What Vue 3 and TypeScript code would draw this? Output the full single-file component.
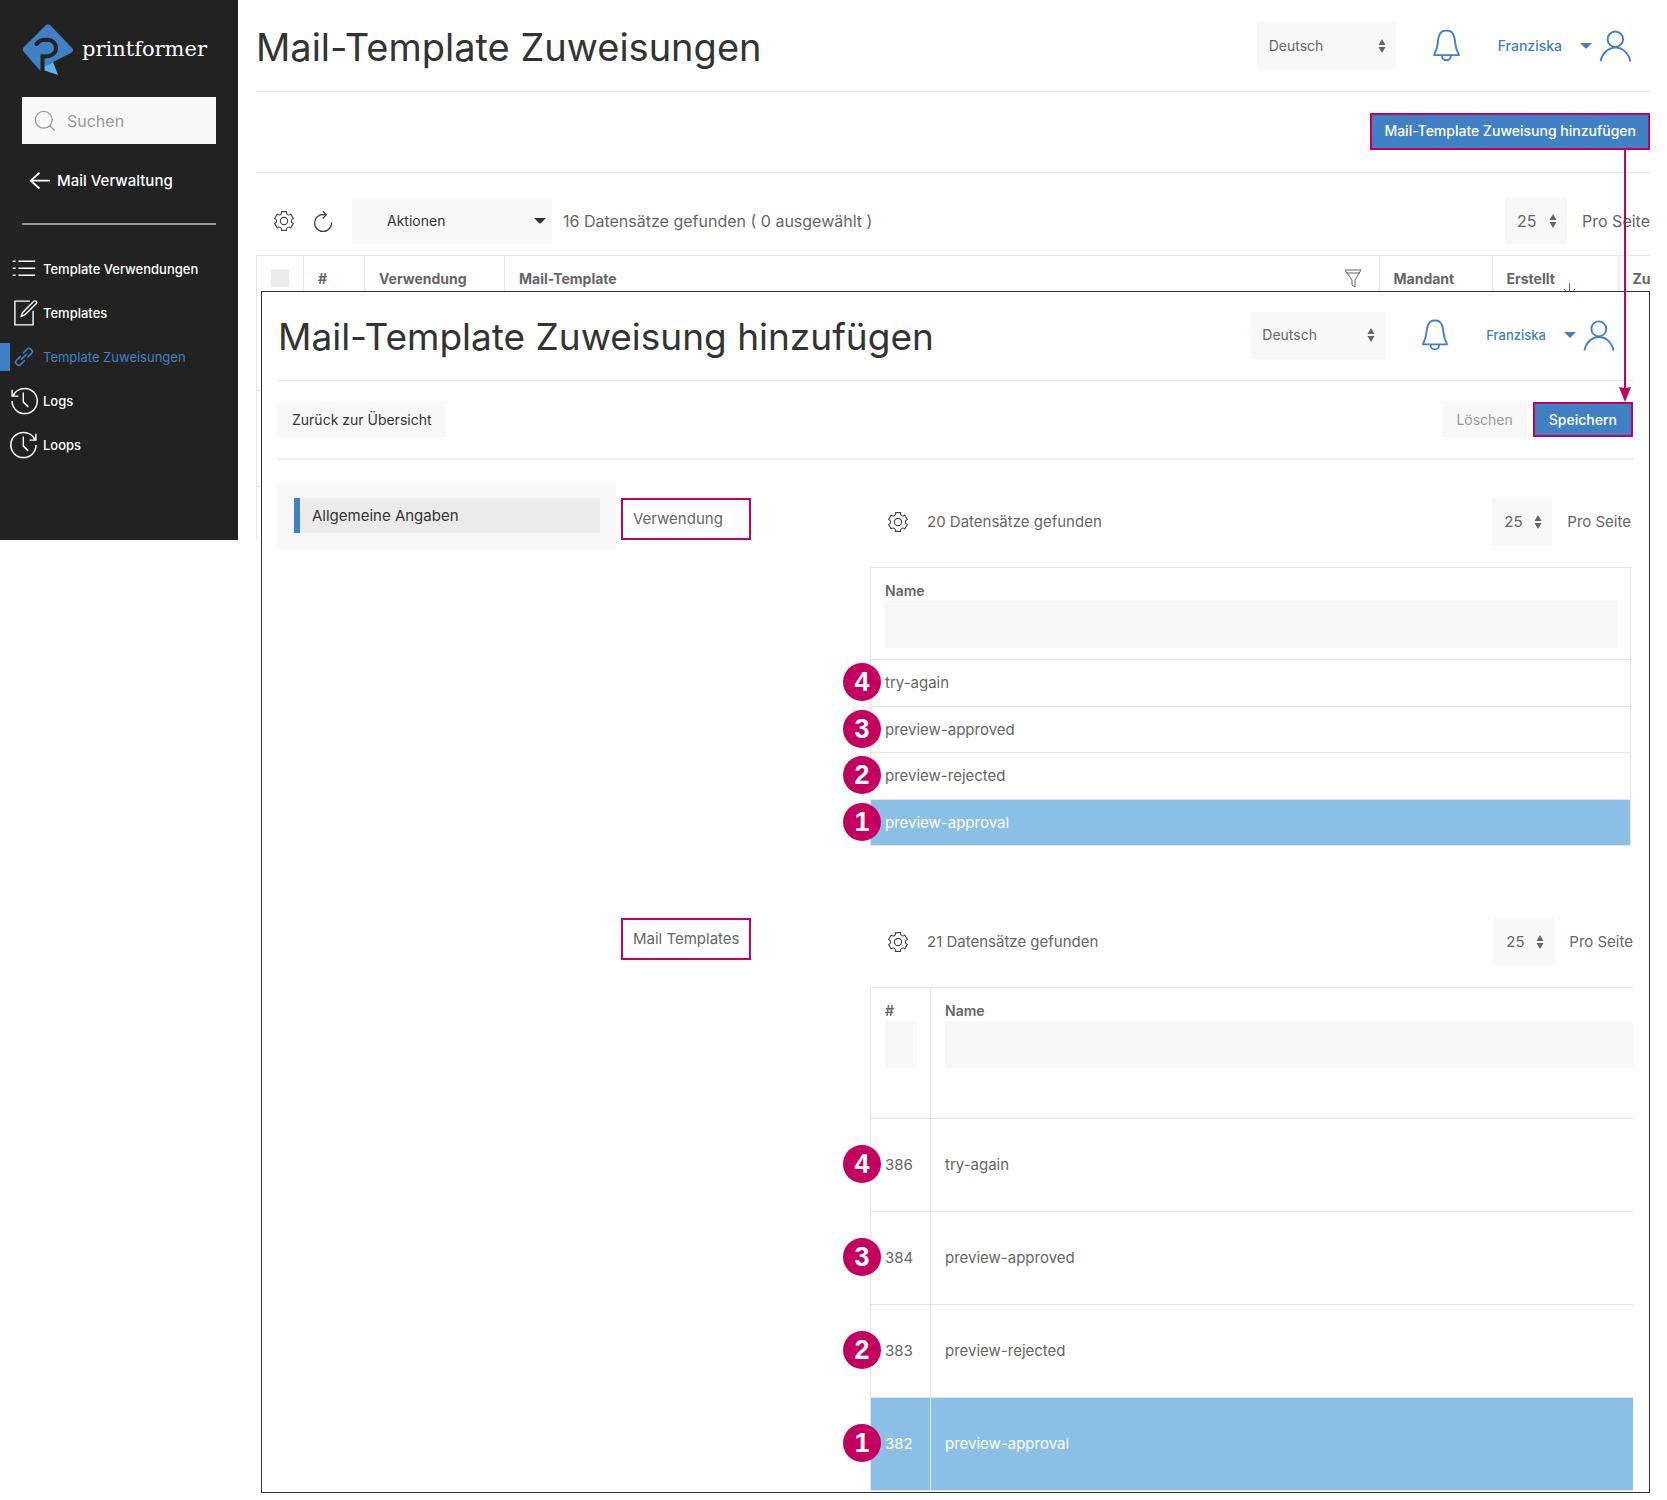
<script setup lang="ts">
import { ref } from 'vue'

interface NavItem {
  label: string
  icon: string
  active?: boolean
}

interface Row {
  id: number
  name: string
  step: number
  selected?: boolean
}

const nav: NavItem[] = [
  { label: 'Template Verwendungen', icon: 'list' },
  { label: 'Templates', icon: 'edit' },
  { label: 'Template Zuweisungen', icon: 'link', active: true },
  { label: 'Logs', icon: 'history' },
  { label: 'Loops', icon: 'future' },
]

const rows: Row[] = [
  { id: 386, name: 'try-again', step: 4 },
  { id: 384, name: 'preview-approved', step: 3 },
  { id: 383, name: 'preview-rejected', step: 2 },
  { id: 382, name: 'preview-approval', step: 1, selected: true },
]

const search = ref('')
</script>

<template>
  <svg class="sprite" aria-hidden="true">
    <symbol id="list" viewBox="0 0 20 20">
      <path fill="currentColor" d="M6 4h12v1H6zM6 9h12v1H6zM6 14h12v1H6zM2 4h2v1H2zM2 9h2v1H2zM2 14h2v1H2z" />
    </symbol>
    <symbol id="edit" viewBox="0 0 20 20">
      <path fill="none" stroke="currentColor" d="M18.65,1.68 C18.41,1.45 18.109,1.33 17.81,1.33 C17.499,1.33 17.209,1.45 16.98,1.68 L8.92,9.76 L8,12.33 L10.55,11.41 L18.651,3.34 C19.12,2.87 19.12,2.15 18.65,1.68 Z M16.5,8.482 L16.5,18.5 L3.5,18.5 L3.5,1.5 L14.211,1.5" />
    </symbol>
    <symbol id="link" viewBox="0 0 20 20">
      <path fill="none" stroke="currentColor" stroke-width="1.1" d="M10.625,12.375 L7.525,15.475 C6.825,16.175 5.925,16.175 5.225,15.475 L4.525,14.775 C3.825,14.074 3.825,13.175 4.525,12.475 L7.625,9.375 M9.325,7.375 L12.425,4.275 C13.125,3.575 14.025,3.575 14.724,4.275 L15.425,4.975 C16.125,5.675 16.125,6.575 15.425,7.275 L12.325,10.375 M7.925,11.875 L11.925,7.975" />
    </symbol>
    <symbol id="history" viewBox="0 0 20 20">
      <path fill="currentColor" d="M1 2h1v4h4v1H1zM9 4h1v7H9z" />
      <path fill="none" stroke="currentColor" stroke-width="1.1" d="M2.1,6.548 C3.391,3.29 6.746,1 10.5,1 C15.5,1 19.5,5 19.5,10 C19.5,15 15.5,19 10.5,19 C5.5,19 1.5,15 1.5,10 M13.018,14.197 L9.445,10.625" />
    </symbol>
    <symbol id="future" viewBox="0 0 20 20">
      <path fill="currentColor" d="M19 2h-1v4h-4v1h5zM9 4h1v7H9z" />
      <path fill="none" stroke="currentColor" stroke-width="1.1" d="M18,6.548 C16.709,3.29 13.354,1 9.6,1 C4.6,1 .6,5 .6,10 C.6,15 4.6,19 9.6,19 C14.6,19 18.6,15 18.6,10 M13.018,14.197 L9.445,10.625" />
    </symbol>
    <symbol id="search" viewBox="0 0 20 20">
      <path fill="none" stroke="currentColor" stroke-width="1.1" d="M16,9 A7,7 0 1 1 2,9 A7,7 0 1 1 16,9 M14,14 L18,18" />
    </symbol>
    <symbol id="back" viewBox="0 0 20 20">
      <path fill="none" stroke="currentColor" d="M10,14 L5,9.5 L10,5 M16,9.5 L5,9.5" />
    </symbol>
    <symbol id="cog" viewBox="0 0 20 20">
      <circle fill="none" stroke="currentColor" cx="9.997" cy="10" r="3.31" />
      <path fill="none" stroke="currentColor" d="M18.488,12.285 L16.205,16.237 C15.322,15.496 14.185,15.281 13.303,15.791 C12.428,16.289 12.047,17.373 12.246,18.5 L7.735,18.5 C7.938,17.374 7.553,16.299 6.684,15.791 C5.801,15.27 4.655,15.492 3.773,16.237 L1.5,12.285 C2.573,11.871 3.317,10.999 3.317,9.991 C3.305,8.98 2.573,8.121 1.5,7.716 L3.765,3.784 C4.645,4.516 5.794,4.738 6.687,4.232 C7.555,3.722 7.939,2.637 7.735,1.5 L12.263,1.5 C12.072,2.637 12.441,3.71 13.314,4.22 C14.206,4.73 15.343,4.516 16.225,3.794 L18.487,7.714 C17.404,8.117 16.661,8.988 16.67,10.009 C16.672,11.018 17.415,11.88 18.488,12.285 Z" />
    </symbol>
    <symbol id="refresh" viewBox="0 0 20 20">
      <path fill="none" stroke="currentColor" stroke-width="1.1" d="M17.08,11.15 C17.09,11.31 17.1,11.47 17.1,11.64 C17.1,15.53 13.94,18.69 10.05,18.69 C6.16,18.68 3,15.53 3,11.63 C3,7.74 6.16,4.58 10.05,4.58 C10.9,4.58 11.71,4.73 12.46,5 M9.9,2 L12.79,4.89 L9.79,7.9" />
    </symbol>
    <symbol id="bell" viewBox="0 0 20 20">
      <path fill="none" stroke="currentColor" stroke-width="1.1" d="M17,15.5 L3,15.5 C2.99,14.61 3.79,13.34 4.1,12.51 C4.58,11.3 4.72,10.35 5.19,7.01 C5.54,4.53 5.89,3.2 7.28,2.16 C8.13,1.56 9.37,1.5 9.81,1.5 L9.96,1.5 C9.96,1.5 11.62,1.41 12.67,2.17 C14.08,3.2 14.42,4.54 14.77,7.02 C15.26,10.35 15.4,11.31 15.87,12.52 C16.2,13.34 17.01,14.61 17,15.5 Z M12.39,16 C12.39,17.37 11.35,18.43 9.91,18.43 C8.48,18.43 7.42,17.37 7.42,16" />
    </symbol>
    <symbol id="user" viewBox="0 0 20 20">
      <circle fill="none" stroke="currentColor" stroke-width="1.1" cx="9.9" cy="6.4" r="4.4" />
      <path fill="none" stroke="currentColor" stroke-width="1.1" d="M1.5,19 C2.3,14.5 5.8,11.2 10,11.2 C14.2,11.2 17.7,14.6 18.5,19.2" />
    </symbol>
    <symbol id="caret" viewBox="0 0 12 6">
      <path fill="currentColor" d="M0,0 H12 L7,5 Q6,6 5,5 Z" />
    </symbol>
    <symbol id="updown" viewBox="0 0 8 14">
      <path fill="currentColor" d="M4,0 L7.5,6 H.5 Z M.5,8 H7.5 L4,14 Z" />
    </symbol>
    <symbol id="filter" viewBox="0 0 18 20">
      <path fill="none" stroke="currentColor" d="M1,1 H17 L11,11 V18 L8,16 V11 Z M2,4 H16" />
    </symbol>
  </svg>

  <div class="page">
    <aside class="sidebar">
      <a class="brand" href="#">
        <svg class="logo" viewBox="0 0 52 52" aria-hidden="true">
          <path fill="#4080c4" d="M23.500 2.500 Q26 0 28.500 2.500 L50 25 Q52.500 28 49 30 L27 41 L21 48 Q19 49 17.500 47 L1.500 28.500 Q0 26.500 1.500 24.500 Z" />
          <path fill="#62b0e6" d="M22 44 L31 39 L36 52 L21 47 Z" />
          <path fill="none" stroke="#222" stroke-width="4" stroke-linecap="round" d="M14.500 21 C19 14.500 34 15 34 25 C34 32 27 34 20.500 33.500 L20.500 48" />
        </svg>
        <span>printformer</span>
      </a>
      <label class="search">
        <svg width="24" height="24" aria-hidden="true"><use href="#search" /></svg>
        <input v-model="search" type="search" placeholder="Suchen" aria-label="Suchen" />
      </label>
      <a class="back" href="#">
        <svg width="35" height="35" aria-hidden="true"><use href="#back" /></svg>
        <span>Mail Verwaltung</span>
      </a>
      <nav>
        <a v-for="item in nav" :key="item.label" href="#" :class="{ active: item.active }">
          <svg width="28" height="28" aria-hidden="true"><use :href="'#' + item.icon" /></svg>
          <span>{{ item.label }}</span>
        </a>
      </nav>
    </aside>

    <main class="main">
      <header class="header">
        <h1>Mail-Template Zuweisungen</h1>
        <label class="select language">
          <select aria-label="Sprache"><option>Deutsch</option></select>
          <svg width="8" height="14" aria-hidden="true"><use href="#updown" /></svg>
        </label>
        <button class="icon" aria-label="Benachrichtigungen"><svg width="35" height="35"><use href="#bell" /></svg></button>
        <button class="user">
          <span>Franziska</span>
          <svg class="caret" width="12" height="6"><use href="#caret" /></svg>
          <svg width="35" height="35"><use href="#user" /></svg>
        </button>
      </header>
      <div class="actions">
        <button class="primary wide">Mail-Template Zuweisung hinzufügen</button>
      </div>
      <div class="toolbar">
        <button class="icon" aria-label="Einstellungen"><svg width="22" height="22"><use href="#cog" /></svg></button>
        <button class="icon" aria-label="Aktualisieren"><svg width="24" height="24"><use href="#refresh" /></svg></button>
        <button class="dropdown">
          <span>Aktionen</span>
          <svg width="12" height="6"><use href="#caret" /></svg>
        </button>
        <span class="count">16 Datensätze gefunden ( 0 ausgewählt )</span>
        <label class="perpage">
          <span class="select">
            <select><option>25</option></select>
            <svg width="8" height="14" aria-hidden="true"><use href="#updown" /></svg>
          </span>
          <span>Pro Seite</span>
        </label>
      </div>
      <div class="listing">
        <table>
          <colgroup>
            <col class="c-check" /><col class="c-id" /><col class="c-use" /><col />
            <col class="c-client" /><col class="c-date" /><col class="c-last" />
          </colgroup>
          <thead>
            <tr>
              <th><input type="checkbox" aria-label="Alle auswählen" /></th>
              <th>#</th>
              <th>Verwendung</th>
              <th>
                <span class="th-line">Mail-Template<svg class="filter" width="18" height="20"><use href="#filter" /></svg></span>
              </th>
              <th>Mandant</th>
              <th>
                <span class="th-line">Erstellt<svg class="sort" width="12" height="20" viewBox="0 0 12 20"><path fill="none" stroke="currentColor" d="M6.500 4 V17 M1 10 L6.500 16 L12 10" /></svg></span>
              </th>
              <th>Zu</th>
            </tr>
          </thead>
          <tbody>
            <tr v-for="n in 2" :key="n"><td v-for="c in 7" :key="c"></td></tr>
          </tbody>
        </table>
      </div>
    </main>

    <section class="panel">
      <header class="header">
        <h2>Mail-Template Zuweisung hinzufügen</h2>
        <label class="select language">
          <select aria-label="Sprache"><option>Deutsch</option></select>
          <svg width="8" height="14" aria-hidden="true"><use href="#updown" /></svg>
        </label>
        <button class="icon" aria-label="Benachrichtigungen"><svg width="34" height="34"><use href="#bell" /></svg></button>
        <button class="user">
          <span>Franziska</span>
          <svg class="caret" width="12" height="6"><use href="#caret" /></svg>
          <svg width="34" height="34"><use href="#user" /></svg>
        </button>
      </header>
      <div class="actions">
        <button class="plain">Zurück zur Übersicht</button>
        <button class="plain delete" disabled>Löschen</button>
        <button class="primary">Speichern</button>
      </div>
      <div class="body">
        <nav class="tabs"><a href="#">Allgemeine Angaben</a></nav>
        <div class="fields">
          <div class="field">
            <h3>Verwendung</h3>
            <div class="data">
              <div class="toolbar">
                <button class="icon" aria-label="Einstellungen"><svg width="22" height="22"><use href="#cog" /></svg></button>
                <span class="count">20 Datensätze gefunden</span>
                <label class="perpage">
                  <span class="select">
                    <select><option>25</option></select>
                    <svg width="8" height="14" aria-hidden="true"><use href="#updown" /></svg>
                  </span>
                  <span>Pro Seite</span>
                </label>
              </div>
              <table class="grid short">
                <thead>
                  <tr><th><label>Name<input type="text" /></label></th></tr>
                </thead>
                <tbody>
                  <tr v-for="row in rows" :key="row.id" :class="{ selected: row.selected }">
                    <td><span class="badge">{{ row.step }}</span>{{ row.name }}</td>
                  </tr>
                </tbody>
              </table>
            </div>
          </div>
          <div class="field">
            <h3>Mail Templates</h3>
            <div class="data">
              <div class="toolbar">
                <button class="icon" aria-label="Einstellungen"><svg width="22" height="22"><use href="#cog" /></svg></button>
                <span class="count">21 Datensätze gefunden</span>
                <label class="perpage">
                  <span class="select">
                    <select><option>25</option></select>
                    <svg width="8" height="14" aria-hidden="true"><use href="#updown" /></svg>
                  </span>
                  <span>Pro Seite</span>
                </label>
              </div>
              <table class="grid tall">
                <colgroup><col class="c-num" /><col /></colgroup>
                <thead>
                  <tr>
                    <th><label>#<input type="text" /></label></th>
                    <th><label>Name<input type="text" /></label></th>
                  </tr>
                </thead>
                <tbody>
                  <tr v-for="row in rows" :key="row.id" :class="{ selected: row.selected }">
                    <td><span class="badge">{{ row.step }}</span>{{ row.id }}</td>
                    <td>{{ row.name }}</td>
                  </tr>
                </tbody>
              </table>
            </div>
          </div>
        </div>
      </div>
    </section>

    <svg class="arrow" width="12" height="253" viewBox="0 0 12 253" aria-hidden="true">
      <path fill="#c3005f" d="M5 0 H7 V238 L12 237 L6 252 L0 237 L5 238 Z" />
    </svg>
  </div>
</template>

<style>
body {
  margin: 0;
  background: #fff;
}
</style>

<style scoped>
.sprite {
  position: absolute;
  width: 0;
  height: 0;
}
.page,
.page * {
  box-sizing: border-box;
}
.page {
  position: relative;
  display: grid;
  grid-template-columns: 238px minmax(0, 1fr);
  font-family: Inter, "Liberation Sans", sans-serif;
  font-size: 15px;
  line-height: 24px;
  color: #666;
}
svg {
  display: block;
  flex: none;
}
button,
input,
select {
  margin: 0;
  padding: 0;
  border: 0;
  border-radius: 0;
  font: inherit;
  color: inherit;
  background: none;
}
a {
  color: inherit;
  text-decoration: none;
}
h1,
h2,
h3 {
  margin: 0;
  font-weight: 400;
}

/* Sidebar */
.sidebar {
  grid-area: 1 / 1;
  align-self: start;
  min-height: 540px;
  background: #222;
  color: #fff;
}
.brand {
  display: flex;
  align-items: center;
  gap: 8px;
  height: 97px;
  padding-left: 22px;
  font-family: "DejaVu Serif", serif;
  font-size: 21px;
}
.logo {
  width: 52px;
  height: 52px;
}
.search {
  display: flex;
  align-items: center;
  gap: 10px;
  height: 47px;
  margin: 0 22px;
  padding-left: 11px;
  background: #f8f8f8;
  color: #999;
}
.search input {
  width: 100%;
  min-width: 0;
  font-size: 16px;
}
.search input::placeholder {
  color: #999;
  opacity: 1;
}
.back {
  display: flex;
  align-items: center;
  height: 81px;
  margin: 0 22px;
  padding-bottom: 5px;
  border-bottom: 2px solid #999;
  font-weight: 500;
}
.sidebar nav {
  padding-top: 30px;
}
.sidebar nav a {
  display: flex;
  align-items: center;
  gap: 5px;
  height: 28px;
  margin-bottom: 16px;
  padding-left: 10px;
  font-size: 13px;
  font-weight: 500;
}
.sidebar nav .active {
  padding-left: 0;
  border-left: 10px solid #4080c4;
  color: #4080c4;
  font-weight: 400;
}

/* Shared header and controls */
.header {
  display: flex;
  align-items: center;
  border-bottom: 1px solid #e5e5e5;
}
h1,
h2 {
  flex: 1;
  line-height: 48px;
  color: #333;
  white-space: nowrap;
}
h1 {
  padding-top: 2px;
  font-size: 38px;
}
h2 {
  padding-top: 4px;
  font-size: 37px;
}
.select {
  position: relative;
  display: flex;
  align-items: center;
  height: 47px;
  background: #f8f8f8;
}
.select select {
  width: 100%;
  height: 100%;
  padding-left: 12px;
  appearance: none;
}
.select svg {
  position: absolute;
  right: 10px;
  pointer-events: none;
}
.language {
  width: 139px;
  margin-right: 33px;
  font-size: 14px;
}
.header .icon {
  color: #4080c4;
}
.user {
  display: flex;
  align-items: center;
  margin: 0 17px 0 34px;
  color: #4080c4;
  font-size: 14px;
  font-weight: 500;
}
.user .caret {
  margin: 0 6px 0 18px;
}
.actions {
  display: flex;
  align-items: center;
  font-size: 14px;
}
.primary,
.plain {
  height: 35px;
  padding: 0 14px;
}
.primary {
  border: 2px solid #c3005f;
  background: #4080c4;
  color: #fff;
  font-weight: 500;
}
.plain {
  background: #f8f8f8;
  color: #333;
}
.delete {
  margin: 0 6px 0 auto;
  color: #999;
}
.toolbar {
  display: flex;
  align-items: center;
}
.toolbar .icon {
  color: #444;
}
.count {
  flex: 1;
}
.perpage {
  display: flex;
  align-items: center;
  gap: 15px;
}
.perpage .select {
  width: 60px;
}

/* Assignment overview */
.main {
  grid-area: 1 / 2;
  align-self: start;
  padding: 0 17px 0 18px;
}
.main .header {
  height: 92px;
}
.main .actions {
  justify-content: flex-end;
  height: 81px;
  padding-bottom: 2px;
  border-bottom: 1px solid #e5e5e5;
}
.actions .wide {
  height: 37px;
  padding: 0 12px;
}
.main .toolbar {
  gap: 16px;
  height: 82px;
  padding: 13px 0 0 17px;
  font-size: 16px;
}
.main .perpage .select {
  width: 62px;
}
.toolbar .dropdown {
  display: flex;
  align-items: center;
  justify-content: space-between;
  width: 200px;
  height: 46px;
  margin: 0 -5px 0 1px;
  padding: 0 6px 0 35px;
  background: #f8f8f8;
  color: #333;
  font-size: 14px;
}
.listing {
  height: 285px;
  overflow: hidden;
}
table {
  width: 100%;
  border-collapse: collapse;
  table-layout: fixed;
}
th,
td {
  border: 1px solid #e5e5e5;
  text-align: left;
}
th {
  font-size: 14px;
  line-height: 20px;
  font-weight: 600;
}
.listing th {
  height: 135px;
  padding: 13px 14px 0;
  font-weight: 700;
  vertical-align: top;
}
.listing td {
  height: 96px;
}
.listing th:last-child,
.listing td:last-child {
  border-right: 0;
}
.listing input {
  display: block;
  width: 18px;
  height: 18px;
  background: #ebebeb;
  appearance: none;
}
.th-line {
  display: flex;
  justify-content: space-between;
}
.filter {
  margin-right: 3px;
}
.sort {
  margin: 10px 29px 0 0;
  color: #4080c4;
}
.c-check { width: 47px; }
.c-id { width: 61px; }
.c-use { width: 140px; }
.c-client { width: 113px; }
.c-date { width: 126px; }
.c-last { width: 32px; }

/* Assignment form */
.panel {
  grid-area: 1 / 1 / 2 / 3;
  z-index: 1;
  margin: 291px 17px 0 261px;
  padding: 0 16px 1px;
  border: 1px solid #333;
  background: #fff;
}
.panel .header {
  height: 89px;
  padding-bottom: 2px;
}
.panel .language {
  width: 135px;
}
.panel .user {
  font-size: 13px;
}
.panel .actions {
  height: 79px;
  border-bottom: 2px solid #eee;
}
.body {
  display: flex;
  gap: 5px;
  padding-top: 22px;
}
.tabs {
  flex: none;
  align-self: flex-start;
  width: 338px;
  padding: 16px;
  background: #f8f8f8;
}
.tabs a {
  display: block;
  padding: 6px 12px 5px;
  border-left: 6px solid #4080c4;
  background: #ebebeb;
  color: #333;
}
.fields {
  flex: 1;
  padding-top: 16px;
}
.field {
  display: flex;
  align-items: flex-start;
}
.field:first-child {
  padding-right: 2px;
}
.field + .field {
  margin-top: 72px;
}
h3 {
  flex: none;
  width: 130px;
  margin-right: 119px;
  padding: 7px 10px;
  border: 2px solid #c3005f;
  font-size: 15px;
  line-height: 24px;
  white-space: nowrap;
}
.data {
  flex: 1;
}
.data .toolbar {
  gap: 18px;
  height: 47px;
  margin-bottom: 22px;
  padding-left: 17px;
}
.grid th {
  height: 92px;
  padding: 13px 13px 10px 14px;
  vertical-align: top;
}
.grid label {
  display: block;
}
.grid input {
  display: block;
  width: 100%;
  height: 47px;
  background: #f8f8f8;
}
.grid td {
  position: relative;
  height: 47px;
  padding: 0 14px;
}
.short tr:nth-child(even) td {
  height: 46px;
}
.grid.tall th {
  height: 131px;
}
.grid.tall td {
  height: 93px;
}
.tall th:last-child,
.tall td:last-child {
  border-right: 0;
}
.tall th:last-child {
  padding-right: 0;
}
.c-num { width: 60px; }
.selected td {
  background: #8bbfe6;
  color: #fff;
}
.badge {
  position: absolute;
  top: calc(50% - 20px);
  left: -28px;
  width: 38px;
  height: 38px;
  border-radius: 50%;
  background: #c3005f;
  color: #fff;
  font: bold 27px/38px "Liberation Sans", sans-serif;
  text-align: center;
}
.arrow {
  position: absolute;
  z-index: 2;
  top: 150px;
  right: 36px;
}
</style>
